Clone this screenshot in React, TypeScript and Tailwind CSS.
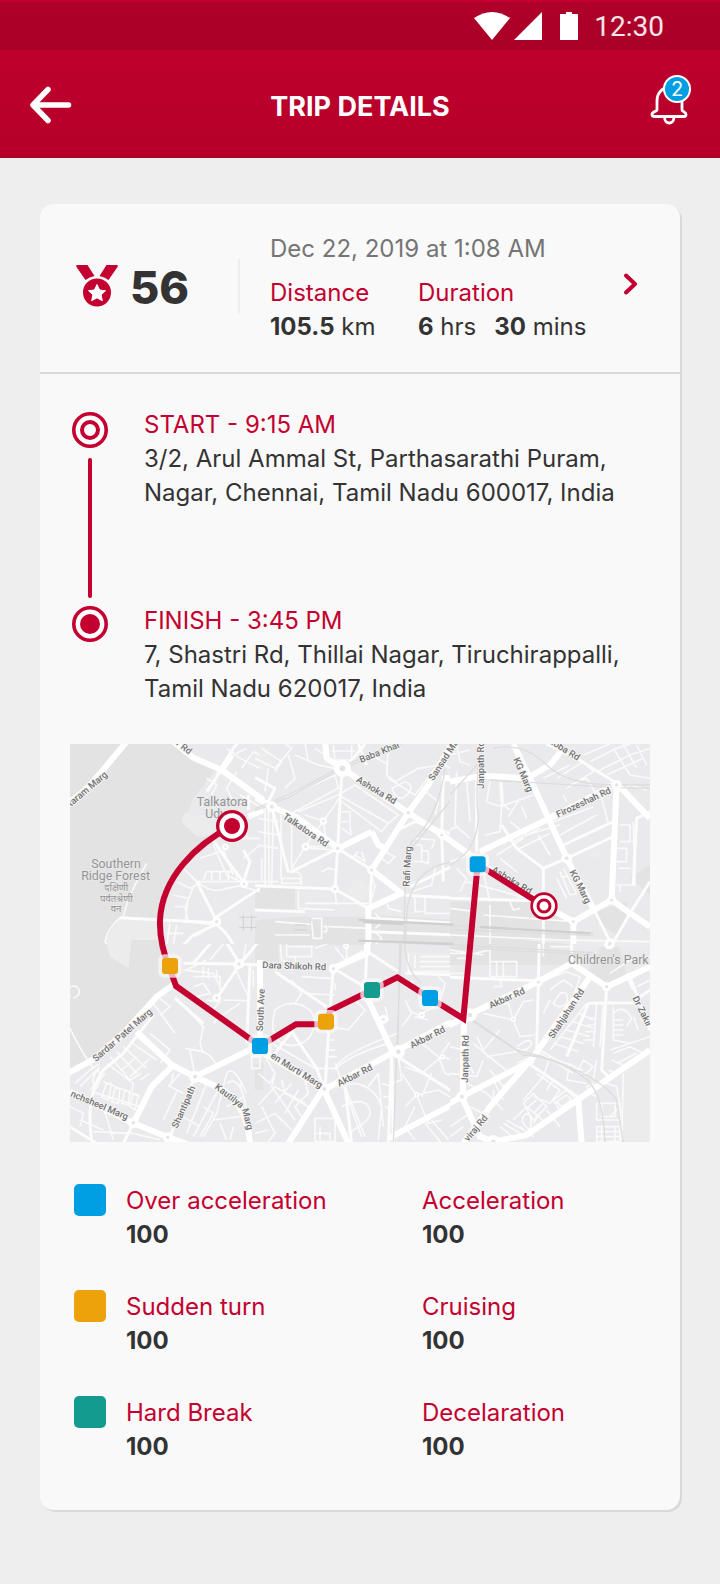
import React from "react";

type Sector = {
  x: number;
  y: number;
  parks?: string;
  blocks?: string;
  wide: string;
  mid: string;
  thin: string;
  rail?: string;
  nodes: [number, number, number][];
};

/* Every sector of the map is drawn in its own coordinates. */
const sectors: Sector[] = [
  {
    x: -30,
    y: -27,
    parks:
      "M30 27H350L470 100L400 190L370 260L450 300Q330 400 300 570V630H30Z",
    blocks:
      "M180 548L300 550V640H150L135 615Z M365 262Q370 215 400 245L440 240L460 290Q420 320 395 290Z",
    wide: "M20 208L75 165L125 110L200 20 M340 20L400 68L485 105L610 195 M480 112L515 60 M565 245L610 225",
    mid: "M470 120L520 40L545 10 M485 105L440 170 M565 180V225 M455 305Q480 350 550 440L570 380L550 345 M410 440L465 548 M180 548L470 563 M465 548L600 460 M470 570Q500 590 520 630 M465 570L400 600L370 630",
    thin: "M500 40L540 70L600 100 M520 60L560 40 M545 100L580 50L600 60 M440 130L470 150L455 180 M530 110L500 160L520 200 M540 180L600 215 M180 548Q140 585 135 620L150 640 M190 545Q200 500 225 450L260 385 M365 395L410 440H545 M340 480L385 490L375 565 M350 440L390 460L420 445 M345 515H375 M460 330L500 420L550 445 M490 345L520 420 M430 435L440 410H530V435 M455 412V435 M480 412V435 M505 412V435 M410 440Q460 480 500 460L550 450 M420 370L480 350 M545 250V310H600 M560 250V310 M550 370L600 330 M555 440H600 M548 455L600 470 M400 455L375 520L385 560L460 570L405 605 M330 565L320 630 M350 570L340 630 M320 595H370",
    nodes: [[552, 447, 12], [470, 560, 14], [496, 336, 10]],
  },
  {
    x: 555,
    y: -27,
    parks: "M0 455L120 460V525H0Z M130 545H340V630H0V555Z M350 540L600 555V625L350 610Z",
    blocks: "M0 40L25 27L60 80L30 110L0 90Z M280 460Q310 410 345 455Q345 490 310 498Q280 490 280 460Z",
    wide: "M-10 180L50 215L130 250L250 340L350 290 M262 100L350 160L460 233L600 325 M590 27L520 150L460 233L350 405L440 475L340 520V640 M210 20L215 70L262 100 M350 290L370 330L400 345 M600 130H560",
    mid: "M262 100L255 200L248 340L240 462 M105 412L248 340L350 405L345 520 M0 452L240 462L340 520 M100 412L50 215 M430 285L480 260L600 300 M465 455L600 390 M565 130L560 300L565 440 M0 128L60 160L35 210 M270 100L330 27 M445 480L600 490 M345 550L440 555L600 565 M345 590L600 600 M310 27L335 90 M0 525L150 530",
    thin: "M0 70L60 100L110 40L90 27 M20 40L80 80L60 110 M100 60L120 130L90 160 M40 100L30 170 M120 60L190 90L240 100 M150 27L160 80 M180 40L210 60 M235 30L240 75H290V30 M230 48H300 M90 190L240 120L250 160L110 235 M130 230L250 180L300 150L430 240L400 265L260 185 M400 265L380 290L260 200 M110 235V400L150 335L205 258L240 210L250 190 M150 335H215L205 258L150 240 M165 340L240 345 M260 230H285V280L290 295 M260 260H280 M260 280L290 300 M300 360L330 380L320 350 M260 350L290 370L310 350 M200 410L220 400L240 405 M30 220V450 M40 220L42 450 M55 220L50 450 M10 250L70 260 M10 290L70 300 M10 330L70 340 M20 370V440H70 M78 240V430 M80 430H135V445H80Z M105 412Q145 400 140 450 M130 465V520L240 525 M150 505H340 M240 470L245 510 M345 405L360 455L345 510 M390 350L420 365L400 385L380 370 M400 27L395 120L420 140L490 100L560 90 M350 60L400 90 M400 130L480 180L540 100 M410 160L450 140Q480 150 460 175Q430 210 410 160 M500 160L550 200L540 240 M480 330H500V380H470 M500 345L520 350V385L500 380 M480 310L540 315L530 340 M510 485H590V535H510Z M480 480V530H505 M395 500L400 520L440 530 M170 560L175 610H200V550H170 M60 560L165 568 M60 600L165 600 M205 575H215V590H205 M220 575L345 580 M360 535L385 560L360 580 M360 590L380 610L360 630 M540 400L530 450L470 470 M580 40L570 90L600 110",
    rail: "M-10 225L100 180L260 95L430 20 M-10 231L100 187L262 102L440 27 M570 100Q550 250 470 320Q445 390 448 640 M600 380Q480 390 456 520L450 640 M600 180L470 340",
    nodes: [[248, 340, 15], [350, 405, 14], [460, 233, 15], [240, 462, 12], [262, 100, 26], [50, 215, 17], [205, 258, 11], [152, 335, 12], [560, 300, 12]],
  },
  {
    x: 1140,
    y: -27,
    parks: "M0 500L270 500L365 560V640H0Z M435 530L530 500L530 545L500 600L440 560Z M540 430L600 390V480Z",
    blocks: "M420 345L445 340L450 365L430 370Z",
    wide: "M-10 310L40 345L100 390L280 510L370 560L485 495L540 535L600 575 M90 350L300 250L500 145L600 250 M190 27L240 130L350 370L430 520 M500 145L485 495 M370 560V640 M0 140L100 122L230 130L300 90L340 40",
    mid: "M350 370L500 300 M350 370L280 400V640 M155 270L200 340L280 400L350 370 M500 145L380 70L290 27 M430 520L480 620 M540 535L600 440 M540 535L480 640 M80 130V350 M0 490L250 497 M300 250L480 160 M340 330L490 260 M600 230L560 250L550 450",
    thin: "M20 27L30 80L60 90 M0 60L60 45 M20 110L15 270L60 310 M0 285L20 275L60 310 M50 140L60 260 M120 140L110 200L155 215L150 140 M155 140L160 210L180 225 M105 300L150 290L155 215 M150 215L250 180 M175 245L210 190 M215 215L230 250 M180 260L230 300L330 270 M190 320L270 280 M200 345L300 295 M265 300L300 360 M140 360L220 310 M150 370L200 410 M300 240L450 170L475 265 M310 260L430 215 M330 300L440 240 M340 180L350 200 M360 150L410 130L440 180 M320 130L400 80L430 110L350 160 M280 130L360 90 M400 60L480 27 M420 80L500 40L540 27 M440 110L540 60L600 40 M470 120L580 70 M490 40L540 120 M520 27L560 100 M560 30L590 90 M540 120L600 130 M510 170L540 150L590 165 M330 410L360 480L380 475L340 400 M320 430L350 490 M330 425H350 M510 270H540V320H510 M500 340H530V380H500 M505 400H540 M550 260L555 450H500 M560 320H545 M510 450V470 M20 400L50 430L30 470 M0 380L60 360 M100 410L120 500 M130 420L210 470L200 500 M50 440L230 490 M180 500L190 525L210 520 M0 520L75 530 M100 540L370 560 M0 600L340 615L600 620 M120 510V630",
    rail: "M108 20Q70 100 85 250Q80 350 0 390 M130 40Q220 20 290 90Q350 150 500 150H600 M120 135L500 158L600 160 M0 180L90 80 M0 572L430 594 M0 583L430 602",
    nodes: [[350, 370, 16], [485, 495, 14], [500, 150, 15], [370, 560, 13], [480, 625, 15], [92, 385, 24]],
  },
  {
    x: -30,
    y: 588,
    parks: "M30 0H300L310 60L340 130L200 270L120 340L30 395Z",
    blocks: "M135 0H215L205 85L150 50Z M170 370L240 305L290 350L220 420Z",
    wide: "M20 402L105 355L190 280L290 170L345 130 M230 275L335 375L405 410L590 320 M30 455L220 550L325 592L400 620 M405 410L480 445Q560 490 570 610 M220 550L275 440L335 380",
    mid: "M405 410L370 490L330 592 M220 550L190 610 M30 560L110 610 M95 600Q75 470 130 390L190 340L280 225 M370 70L540 72L600 75 M495 0L540 72L600 0 M470 175L540 72 M345 175L430 250 M570 75L560 310 M400 70L460 0",
    thin: "M30 265Q60 330 100 385 M30 170Q20 130 50 140Q70 160 40 175 M280 190L345 280 M300 175L330 200L300 225 M345 170L430 260L420 310L430 340 M390 330L405 410 M375 325L430 335Q460 350 465 370 M150 350L210 420L245 400 M170 335L230 400 M190 320L260 385 M210 305L290 360 M230 290L300 350 M185 390L230 350 M210 410L265 360 M140 370L220 430L215 455 M240 420L270 400 M270 280L330 330L300 370 M45 430L90 390L120 370 M60 440L120 380 M90 450L135 400 M105 450Q90 410 115 390Q130 420 105 450 M125 470L140 430L155 430L145 480Z M155 485L165 445L180 445L175 490Z M185 490L195 450L210 455L205 495Z M210 500L220 460L235 465L225 510Z M95 455L240 500 M240 470L130 425 M340 400L330 440L370 460 M325 440L360 400 M350 455L310 540 M440 430L380 580 M480 440L400 590 M430 500L460 520L420 590 M350 520L420 560 M500 400L470 520L430 590 M500 430Q540 400 560 510 M540 430L550 470L500 500 M460 540L540 530 M480 550L500 600 M520 560L510 600 M500 400Q520 370 560 460 M30 500L70 520L60 560 M60 540L130 570 M100 575L220 580L300 600 M130 500L160 600 M370 90L460 100L480 140 M400 110H480V150 M430 80V110H470V90 M445 85V115 M400 140L430 130L450 160L410 170 M440 180L480 185L450 220 M490 180L560 182 M460 250L480 230L540 190 M500 0L450 60 M560 0L550 60 M440 60L380 90 M520 75L570 180 M580 90V140 M575 350H600V385H575Z",
    nodes: [[405, 410, 18], [537, 72, 15], [470, 174, 13], [220, 548, 16], [323, 592, 15]],
  },
  {
    x: 555,
    y: 588,
    parks: "M0 0H70V65H0Z M350 0H600V20L350 5Z M0 375L25 370V450H0Z",
    blocks: "M460 35L600 45V95H460Z",
    wide: "M337 0V40L235 85 M340 180L410 330 M205 450L410 340L600 240 M30 340L205 445L280 610 M15 60V330 M-10 290L15 320 M205 445L100 610 M400 595L600 490 M335 0L337 40",
    mid: "M235 85L225 210L210 445 M60 95L215 200 M235 85L345 150 M345 40L430 95 M335 40L330 150 M0 328L30 340 M410 340L415 610 M420 345L600 460 M450 100L600 105 M410 335L400 610 M125 255L60 340 M270 440L290 610 M100 260L185 385L205 440",
    thin: "M75 0L80 60L130 75 M95 0V50H170V20 M100 20H175 M120 50L125 85 M180 25L220 10 M240 20L270 60L330 30 M275 18V55 M110 120L140 160L120 190 M140 110L230 115 M150 160L240 165 M240 130V150 M60 210Q110 170 165 210Q190 240 165 290Q130 330 80 310Q40 290 60 210 M50 310L180 385H240Q260 340 430 280 M240 390Q270 350 400 310 M220 300H240 M220 330H240 M220 350H245 M390 200L400 240L380 250 M300 180L330 210L280 270L230 260 M240 370L320 590 M245 440L300 430Q360 440 380 500L370 600 M260 500Q320 470 340 500Q360 530 310 560L280 580 M270 440L330 590 M370 400L385 560 M380 430L410 440 M385 470H410 M390 500L415 510 M340 440L370 400 M180 535H240V605H180Z M180 580H225V600 M195 560V600 M10 495L60 440L150 490 M60 400L50 440L120 540 M80 420L90 460L160 500 M110 430L60 490 M130 450L90 520 M30 350L60 400L45 430L10 400 M150 420L160 460L120 500L140 530 M0 550L60 520L110 570 M20 500L60 580L40 605 M0 580L40 570 M430 350L440 420L410 430 M450 380L500 400L560 350L590 360 M500 310L550 350L570 400L600 410 M560 340L590 300 M450 500L485 465L520 550L560 540 M480 460L440 400 M485 465L550 450L600 480 M480 500L450 560L480 600 M500 470L530 400 M510 550L560 610 M530 540L580 600 M460 210L490 225L540 200 M480 230L520 240 M450 180L470 220L440 260 M460 40V95H600 M480 45V85 M495 50H600 M495 65H600 M495 80H600 M550 110L570 130L560 170 M590 20V80 M470 120L480 150",
    rail: "M440 0L435 100L425 340L415 610 M448 0Q450 90 500 130 M435 0L428 340",
    nodes: [[208, 447, 17], [235, 86, 14], [385, 238, 13], [273, 18, 9], [485, 464, 8], [562, 350, 8], [500, 225, 10], [430, 335, 20], [340, 175, 12]],
  },
  {
    x: 1140,
    y: 588,
    parks: "M0 10L430 35L350 75H0Z M460 0L435 60L410 100L470 135L530 100L500 0Z",
    blocks: "M525 390L600 340V610H515Z M220 0L600 0V20H440Z",
    wide: "M-10 260L75 215L265 125L365 70L470 140L600 80 M420 110L250 350L120 500L40 610 M250 360L35 470L-10 495 M600 330L440 440L230 585L130 605L90 590L35 470 M385 480L395 610 M42 240L38 470",
    mid: "M365 0V70 M268 0L260 330 M470 140L455 390L475 410 M540 110L600 270 M235 370L390 475 M0 112L260 122 M415 190L545 188L600 150 M480 140L600 85 M530 100L550 150 M415 190L350 350",
    thin: "M270 125L350 95L390 110L370 170L280 320 M300 150L340 120L370 140 M330 160Q360 150 350 190Q330 210 310 190L330 160 M300 180L280 220 M410 190L300 330 M385 220L430 240 M370 245L430 265 M350 270L420 290 M330 290L400 310 M310 310L385 335 M440 190L430 320 M415 235H440 M410 255H438 M405 275H438 M400 300H435 M460 195L450 320 M490 200V300L540 310 M490 240H520 M490 255H520 M490 270H520 M490 285H520 M490 220Q520 190 545 235L530 260 M550 230L565 270 M480 330L600 290 M490 340L540 320L580 340 M485 360L530 380 M500 370L560 340 M475 390L500 400 M0 40H60V100H0 M20 55H50V85 M75 40L120 30V110 M120 65H200V110H120 M140 65V110 M160 65V110 M0 30L100 45 M150 115L155 140H130 M280 0V50 M300 20H360 M100 220L190 240L220 185L250 180 M190 240L175 190L140 195 M190 240L210 290L255 285 M70 310L130 360L180 400 M80 290L100 330L150 270 M100 360L80 410L0 400 M110 350L230 330 M0 320L40 330L70 400 M120 390L160 440L180 420 M50 430L110 460L160 510 M100 440L130 420L160 480 M60 500L120 530 M130 450V500 M200 370L270 340L370 400 M270 330L320 360L380 380 M300 350L280 410L220 480 M260 400L330 450L300 490L250 470 M290 410L310 420L290 450 M310 480L350 450L380 480L330 510Z M320 485L350 465L365 480L335 500Z M220 490L250 460L290 500L250 540Z M235 500L260 480 M250 520L280 490 M190 540L230 500L290 550 M210 560L250 590 M150 560L200 600 M160 550L210 580 M170 540L220 570 M290 510L330 560 M240 570Q200 540 230 520Q250 530 240 570 M270 520L250 550 M360 370L350 420L410 430 M380 400L400 360L430 380L410 400Z M440 360L430 420 M350 380L400 390 M410 440L430 430L440 470L420 460Z M470 430L500 440L510 500L480 530 M440 490H510V540H440Z M455 495V530H495V495 M440 560H510V605H440Z M455 560V605 M495 560V605 M440 575H510 M440 590H510 M520 400L515 600 M0 560L60 520 M0 590L40 560 M75 560L60 590 M540 120L590 80 M560 140L600 120 M480 100L540 60L600 50 M200 320Q240 290 245 310Q230 340 200 325",
    rail: "M40 220L200 330Q300 355 330 370Q460 420 500 480L520 610 M50 232L220 345Q310 350 400 410Q460 450 465 610 M0 14L430 38 M0 22L425 44",
    nodes: [[36, 470, 17], [265, 126, 14], [190, 238, 8], [478, 12, 16], [60, 225, 20], [470, 140, 14], [130, 605, 20]],
  },
];

type RoadLabel = [number, number, number, string];

const roadLabels: RoadLabel[] = [
  [3, 188, -40, "taram Marg"],
  [305, -8, 38, "ar Rd"],
  [637, 222, 34, "Talkatora Rd"],
  [873, 57, -22, "Baba Khar"],
  [857, 112, 31, "Ashoka Rd"],
  [1090, 112, -57, "Sansad Marg"],
  [1018, 428, -87, "Rafi Marg"],
  [1242, 134, -90, "Janpath Rd"],
  [1330, 46, 67, "KG Marg"],
  [1435, -4, 32, "noba Rd"],
  [1464, 221, -25, "Firozeshah Rd"],
  [1263, 382, 31, "Ashoka Rd"],
  [1498, 384, 63, "KG Marg"],
  [78, 954, -41, "Sardar Patel Marg"],
  [0, 1056, 23, "nchsheel Marg"],
  [322, 1154, -66, "Shantipath"],
  [433, 1032, 38, "Kautilya"],
  [516, 1096, 76, "Marg"],
  [577, 672, 2, "Dara Shikoh Rd"],
  [578, 862, -87, "South Ave"],
  [600, 940, 32, "en Murti Marg"],
  [808, 1028, -27, "Akbar Rd"],
  [1026, 914, -27, "Akbar Rd"],
  [1262, 794, -24, "Akbar Rd"],
  [1450, 886, -57, "Shahjahan Rd"],
  [1687, 762, 64, "Dr Zakir"],
  [1194, 1016, -89, "Janpath Rd"],
  [1195, 1194, -50, "viraj Rd"],
];

const placeLabels: [number, number, number, string][] = [
  [457, 186, 37, "Talkatora"],
  [457, 222, 37, "Udyan"],
  [138, 372, 37, "Southern"],
  [137, 408, 37, "Ridge Forest"],
  [139, 442, 29, "दक्षिणी"],
  [139, 473, 29, "पर्वतश्रेणी"],
  [138, 504, 29, "वन"],
  [1615, 659, 37, "Children's Park"],
];

const events: [number, number, string][] = [
  [1223, 361, "#009fe3"],
  [1080, 762, "#009fe3"],
  [570, 906, "#009fe3"],
  [300, 666, "#eca30b"],
  [768, 833, "#eca30b"],
  [906, 738, "#139b90"],
];

function TripMap() {
  return (
    <svg
      viewBox="0 0 1740 1194"
      className="block w-full"
      role="img"
      aria-label="Trip route map"
      fill="none"
      strokeLinejoin="round"
    >
      <rect width="1740" height="1194" fill="#eae9eb" />
      {sectors.map((s, i) => (
        <g key={i} transform={`translate(${s.x} ${s.y})`}>
          <path d={s.parks} fill="#e3e3e3" />
          <path d={s.blocks} fill="#ececec" />
        </g>
      ))}
      {sectors.map((s, i) => (
        <svg
          key={i}
          x={s.x < 0 ? 0 : s.x}
          y={s.y < 0 ? 0 : s.y + 12}
          width={s.x > 1000 ? 600 : 585}
          height={600}
          viewBox={`${s.x < 0 ? 30 : 0} ${s.y < 0 ? 27 : 12} ${s.x > 1000 ? 600 : 585} 600`}
        >
          <path d={s.thin} stroke="#fafafa" strokeWidth="5" />
          <path d={s.mid} stroke="#fcfcfc" strokeWidth="9" />
          <path d={s.wide} stroke="#ffffff" strokeWidth="18" />
          <path d={s.rail} stroke="#dddddd" strokeWidth="4" />
          {s.nodes.map(([x, y, r], n) => (
            <g key={n}>
              <circle cx={x} cy={y} r={r} fill="#fefefe" />
              <circle cx={x} cy={y} r={r / 3} fill="#e4e4e6" />
            </g>
          ))}
        </svg>
      ))}
      <path
        d="M865 528L1150 542 M865 590L1150 600 M1230 549L1560 568 M880 534L1000 540"
        stroke="#d0d0d0"
        strokeWidth="7"
      />
      <path
        d="M508 520H560 M508 550H560 M520 512V560 M545 512V560 M675 543H710 M675 558H710"
        stroke="#cfcfcf"
        strokeWidth="3"
      />
      <g
        fill="#727272"
        stroke="#f5f5f5"
        strokeWidth="6"
        paintOrder="stroke"
        className="font-[Roboto,sans-serif] text-[28px] font-medium"
      >
        {roadLabels.map(([x, y, a, t], i) => (
          <text key={i} transform={`translate(${x} ${y}) rotate(${a})`}>
            {t}
          </text>
        ))}
      </g>
      <g
        fill="#949494"
        stroke="#ececec"
        strokeWidth="3"
        paintOrder="stroke"
        textAnchor="middle"
        className="font-[Roboto,'Noto_Sans',sans-serif]"
      >
        {placeLabels.map(([x, y, size, t]) => (
          <text key={t} x={x} y={y} fontSize={size}>
            {t}
          </text>
        ))}
      </g>
      <path
        d="M486 246C380 300 275 400 270 530C268 590 285 640 300 676L318 726L570 906L678 841H768L780 800L906 738L982 700L1080 762L1180 824L1223 361L1422 486"
        stroke="#c3002f"
        strokeWidth="18"
        strokeLinejoin="miter"
      />
      {events.map(([x, y, c], i) => (
        <g key={i}>
          <rect x={x - 35} y={y - 35} width="70" height="70" rx="18" fill="#fafafa" fillOpacity=".72" />
          <rect x={x - 24} y={y - 24} width="48" height="48" rx="10" fill={c} />
        </g>
      ))}
      <circle cx="486" cy="246" r="43" fill="#fff" stroke="#c3002f" strokeWidth="10" />
      <circle cx="486" cy="246" r="24" fill="#c3002f" />
      <circle cx="1422" cy="486" r="37" fill="#fff" stroke="#c3002f" strokeWidth="8" />
      <circle cx="1422" cy="486" r="18" fill="#fff" stroke="#c3002f" strokeWidth="9" />
    </svg>
  );
}

function StopMark({ filled }: { filled?: boolean }) {
  return (
    <svg viewBox="0 0 36 36" className="size-9 shrink-0" aria-hidden="true">
      <circle cx="18" cy="18" r="16.2" fill="#fff" stroke="#c3002f" strokeWidth="3.6" />
      {filled ? (
        <circle cx="18" cy="18" r="10" fill="#c3002f" />
      ) : (
        <circle cx="18" cy="18" r="8" fill="#fff" stroke="#c3002f" strokeWidth="4" />
      )}
    </svg>
  );
}

const metrics = [
  { color: "bg-[#009fe3]", event: "Over acceleration", phase: "Acceleration" },
  { color: "bg-[#eca30b]", event: "Sudden turn", phase: "Cruising" },
  { color: "bg-[#139b90]", event: "Hard Break", phase: "Decelaration" },
];

export default function App() {
  return (
    <div className="min-h-screen bg-[#eeeeee] pb-[74px] font-[Inter,sans-serif] text-2xl leading-[34px] text-[#333333]">
      <header className="border-b-2 border-[#a80028] bg-linear-to-b from-[#c3002f] to-[#b50029] text-white">
        <div className="flex h-[50px] items-center justify-end border-t-2 border-[#c3002f] bg-black/10 bg-clip-padding pr-14">
          <svg viewBox="0 0 104 28" className="h-7 w-[104px]" fill="#fff" aria-hidden="true">
            <path d="M18 28L0 6Q18-6 36 6Z" />
            <path d="M40 28L68 0V28Z" />
            <path d="M86 2H92V0H98V2H104V28H86Z" />
          </svg>
          <span className="ml-4 pt-0.5 font-[Roboto,sans-serif] text-[28px] text-white/90">12:30</span>
        </div>
        <div className="flex h-[106px] items-center justify-between px-[30px] pt-1">
          <button type="button" aria-label="Back" className="w-[42px]">
            <svg viewBox="0 0 42 38" className="w-full" fill="none" stroke="#fff" strokeWidth="5.5" strokeLinecap="round" strokeLinejoin="round">
              <path d="M18 3.5L3 19L18 34.5M4 19H38.500" />
            </svg>
          </button>
          <h1 className="pt-1 text-[27px] font-bold">TRIP DETAILS</h1>
          <button type="button" aria-label="Notifications, 2 new" className="relative mb-2.5 w-[42px]">
            <svg viewBox="0 0 42 50" className="w-full" fill="none" stroke="#fff" strokeWidth="2.8" strokeLinejoin="round">
              <path d="M9 35V26C9 18 14 12.500 21.500 12.500S34 18 34 26V35C34 36.500 38 36.500 38 39.500C38 41 37 41.500 36 41.500H6.500C5 41.500 4 41 4 39.500C4 36.500 9 36.500 9 35Z" />
              <path d="M16.500 42C16.500 50 26 50 26 42" />
            </svg>
            <span className="absolute top-0 left-[15px] flex size-7 items-center justify-center rounded-full border-2 border-white bg-[#009fe3] text-[20px] leading-none">
              2
            </span>
          </button>
        </div>
      </header>

      <main className="mx-10 mt-[46px] rounded-[14px] bg-[#f9f9f9] pb-2 shadow-[2px_2px_0_#d9d9d9]">
        <section className="flex items-center border-b-2 border-[#d9d9d9] pt-7 pr-10 pb-7 pl-9">
          <svg viewBox="0 0 42 42" className="mb-1 size-[42px]" fill="#c3002f" aria-hidden="true">
            <path d="M1.500 0H11.500L18.500 11Q13.500 12 9.500 15L.5 2Q-.5 0 1.500 0Z" />
            <path d="M40.500 0H30.500L23.500 11Q28.500 12 32.500 15L41.500 2Q42.500 0 40.500 0Z" />
            <circle cx="21" cy="27.500" r="14" />
            <path d="M21 19.500L23.600 25L29.500 25.700L25.200 29.800L26.300 35.700L21 32.800L15.700 35.700L16.800 29.800L12.500 25.700L18.400 25Z" fill="#fff" stroke="#fff" strokeLinejoin="round" />
          </svg>
          <strong className="ml-3 w-[108px] text-[45px] font-extrabold">56</strong>
          <span className="mb-1 h-[54px] w-0.5 bg-[#eeeeee]" />
          <div className="ml-[30px] flex-1 whitespace-nowrap">
            <p className="mb-2.5 text-[#757575]">Dec 22, 2019 at 1:08 AM</p>
            <dl className="flex">
              <div className="w-[148px]">
                <dt className="text-[#c3002f]">Distance</dt>
                <dd><b>105.5</b> km</dd>
              </div>
              <div>
                <dt className="text-[#c3002f]">Duration</dt>
                <dd className="flex gap-[18px]"><span><b>6</b> hrs</span><span><b>30</b> mins</span></dd>
              </div>
            </dl>
          </div>
          <button type="button" aria-label="Open trip" className="mb-2 w-4">
            <svg viewBox="0 0 16 22" className="w-full" fill="none" stroke="#c3002f" strokeWidth="4" strokeLinecap="round" strokeLinejoin="round">
              <path d="M2 2.500L11 11L2 19.500" />
            </svg>
          </button>
        </section>

        <ol className="px-8 pt-[34px] whitespace-nowrap">
          <li className="flex min-h-[196px] gap-9">
            <div className="flex flex-col items-center pt-1">
              <StopMark />
              <span className="mt-2.5 h-[140px] w-1 rounded-full bg-[#c3002f]" />
            </div>
            <div>
              <h2 className="text-[#c3002f]">START - 9:15 AM</h2>
              <p>3/2, Arul Ammal St, Parthasarathi Puram,<br />Nagar, Chennai, Tamil Nadu 600017, India</p>
            </div>
          </li>
          <li className="flex gap-9">
            <div className="pt-0.5"><StopMark filled /></div>
            <div>
              <h2 className="text-[#c3002f]">FINISH - 3:45 PM</h2>
              <p>7, Shastri Rd, Thillai Nagar, Tiruchirappalli,<br />Tamil Nadu 620017, India</p>
            </div>
          </li>
        </ol>

        <div className="px-[30px] pt-[38px]">
          <TripMap />
        </div>

        <div className="mt-[42px] pl-[34px]">
          {metrics.map((m) => (
            <dl key={m.event} className="flex h-[106px]">
              <span className={`mr-5 size-8 rounded-[5px] ${m.color}`} />
              <div className="w-[296px]">
                <dt className="text-[#c3002f]">{m.event}</dt>
                <dd className="font-bold">100</dd>
              </div>
              <div>
                <dt className="text-[#c3002f]">{m.phase}</dt>
                <dd className="font-bold">100</dd>
              </div>
            </dl>
          ))}
        </div>
      </main>
    </div>
  );
}
